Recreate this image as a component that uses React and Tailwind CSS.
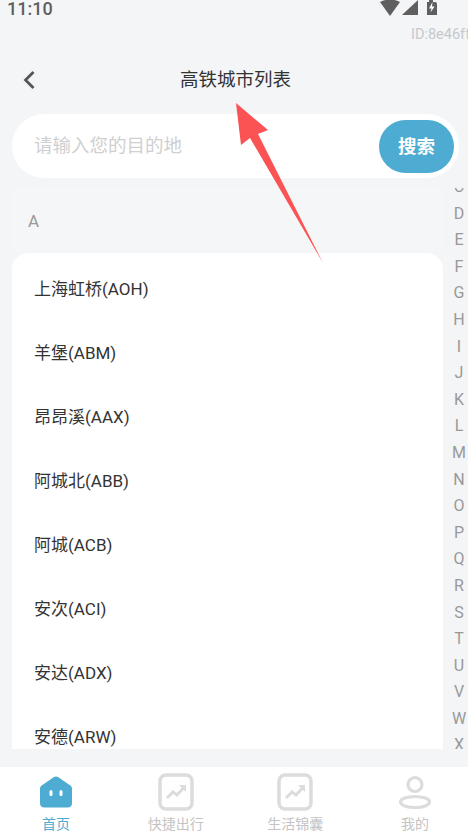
const cities = ['上海虹桥(AOH)', '羊堡(ABM)', '昂昂溪(AAX)', '阿城北(ABB)', '阿城(ACB)', '安次(ACI)', '安达(ADX)', '安德(ARW)'];
const letters = ['C', 'D', 'E', 'F', 'G', 'H', 'I', 'J', 'K', 'L', 'M', 'N', 'O', 'P', 'Q', 'R', 'S', 'T', 'U', 'V', 'W', 'X'];

function HomeIcon() {
  return (
    <svg width="32" height="32" viewBox="0 0 32 32">
      <path d="M13.6 1.2 Q16 0 18.4 1.2 L30 9.2 Q32 10.2 32 12.5 V27 Q32 31.5 27.5 31.5 H4.5 Q0 31.5 0 27 V12.5 Q0 10.2 2 9.2 Z" fill="#4eabd1" />
      <rect x="9.5" y="14" width="3" height="6" rx="1.5" fill="#fff" />
      <rect x="19.5" y="14" width="3" height="6" rx="1.5" fill="#fff" />
    </svg>
  );
}

function TrendIcon() {
  return (
    <svg width="36" height="38" viewBox="0 0 36 38">
      <rect x="2" y="2" width="32" height="34" rx="6" fill="none" stroke="#dcdcdc" strokeWidth="3.5" />
      <path d="M9 25 L15 19 L19 22 L25.5 15" fill="none" stroke="#dcdcdc" strokeWidth="3" />
      <path d="M21 12 H28 V19 Z" fill="#dcdcdc" />
    </svg>
  );
}

function PersonIcon() {
  return (
    <svg width="34" height="34" viewBox="0 0 34 34">
      <circle cx="17" cy="9.5" r="7" fill="none" stroke="#dcdcdc" strokeWidth="3.2" />
      <ellipse cx="17" cy="27" rx="14.5" ry="5.5" fill="none" stroke="#dcdcdc" strokeWidth="3.2" />
    </svg>
  );
}

function Tab({ icon, label, active }) {
  return (
    <div className="w-10 h-full flex flex-col items-center">
      <div className="h-[45px] flex items-center justify-center">{icon}</div>
      <span className={`text-[14px] leading-[20px] whitespace-nowrap ${active ? 'text-[#4eabd1]' : 'text-[#c4c4c4]'}`}>{label}</span>
    </div>
  );
}

export default function App() {
  return (
    <div className="relative w-[468px] h-[836px] overflow-hidden bg-[#f3f5f7] flex flex-col font-['Roboto','Noto_Sans_CJK_SC',sans-serif]">
      {/* status bar */}
      <div className="h-[17px] px-[7px] flex items-center justify-between">
        <span className="text-[18px] leading-[17px] text-[#5f5f5f] font-medium">11:10</span>
        <svg width="60" height="17" viewBox="0 0 60 17" className="mr-[21px]">
          <path d="M0 2 Q10 -3 20 2 L10 16 Z" fill="#5f5f5f" />
          <path d="M22 15 L38 0 V15 Z" fill="#5f5f5f" />
          <path d="M47 2 H49 V0 H53 V2 H55 Q57 2 57 4 V15 H47 Z" fill="#5f5f5f" />
          <path d="M52.5 2 L49 8.5 H51.5 L50.5 12.5 L54.5 6.5 H52 Z" fill="#fff" />
        </svg>
      </div>
      <div className="h-[17px] mt-[9px] pl-[411px] whitespace-nowrap text-[14.5px] leading-[17px] text-[#c6c9cc]">ID:8e46ff</div>

      {/* title */}
      <div className="h-[44px] mt-[15px] relative flex items-center justify-center pl-[3px]">
        <svg width="14" height="20" viewBox="0 0 14 20" className="absolute left-[22px] top-[12px]">
          <path d="M11.5 2 L3.5 10 L11.5 18" fill="none" stroke="#555" strokeWidth="2.8" />
        </svg>
        <span className="text-[18.5px] leading-[26px] text-[#333]">高铁城市列表</span>
      </div>

      {/* search */}
      <div className="mt-[12px] ml-[12px] w-[447px] h-[64px] rounded-[32px] bg-white flex items-center justify-between pl-[22px] pr-[5px]">
        <span className="text-[18.5px] text-[#cfcfcf] pt-[1px]">请输入您的目的地</span>
        <button className="w-[75px] h-[53px] rounded-[27px] bg-[#4eabd1] text-white text-[18.5px] font-bold pt-[3px]">搜索</button>
      </div>

      {/* list */}
      <div className="mt-[10px] h-[561px] flex">
        <div className="ml-[12px] w-[431px] flex flex-col overflow-hidden">
          <div className="h-[65px] flex items-center pl-[16px] pt-[2px] bg-[#f5f6f7] text-[17px] text-[#999]">A</div>
          <div className="flex-1 bg-white rounded-t-[16px] pl-[22px] pt-[5px] overflow-hidden">
            {cities.map((city) => (
              <div key={city} className="h-[64px] flex items-center text-[17px] text-[#333]">{city}</div>
            ))}
          </div>
        </div>
        <div className="flex-1 overflow-hidden">
          <div className="-mt-[14px] flex flex-col items-center pl-[7px]">
            {letters.map((l) => (
              <div key={l} className="h-[26.6px] leading-[26.6px] text-[16px] text-[#999]">{l}</div>
            ))}
          </div>
        </div>
      </div>

      {/* tab bar */}
      <div className="mt-[18px] flex-1 bg-white flex justify-between pl-[36px] pr-[33px] pt-[2px]">
        <Tab icon={<HomeIcon />} label="首页" active />
        <Tab icon={<TrendIcon />} label="快捷出行" />
        <Tab icon={<TrendIcon />} label="生活锦囊" />
        <Tab icon={<PersonIcon />} label="我的" />
      </div>

      {/* red arrow annotation */}
      <svg width="468" height="836" viewBox="0 0 468 836" className="absolute left-0 top-0 pointer-events-none">
        <path d="M236 103 L268 130 L258 134 L323 263 L250 138 L241 145 Z" fill="#fb5254" />
      </svg>
    </div>
  );
}
